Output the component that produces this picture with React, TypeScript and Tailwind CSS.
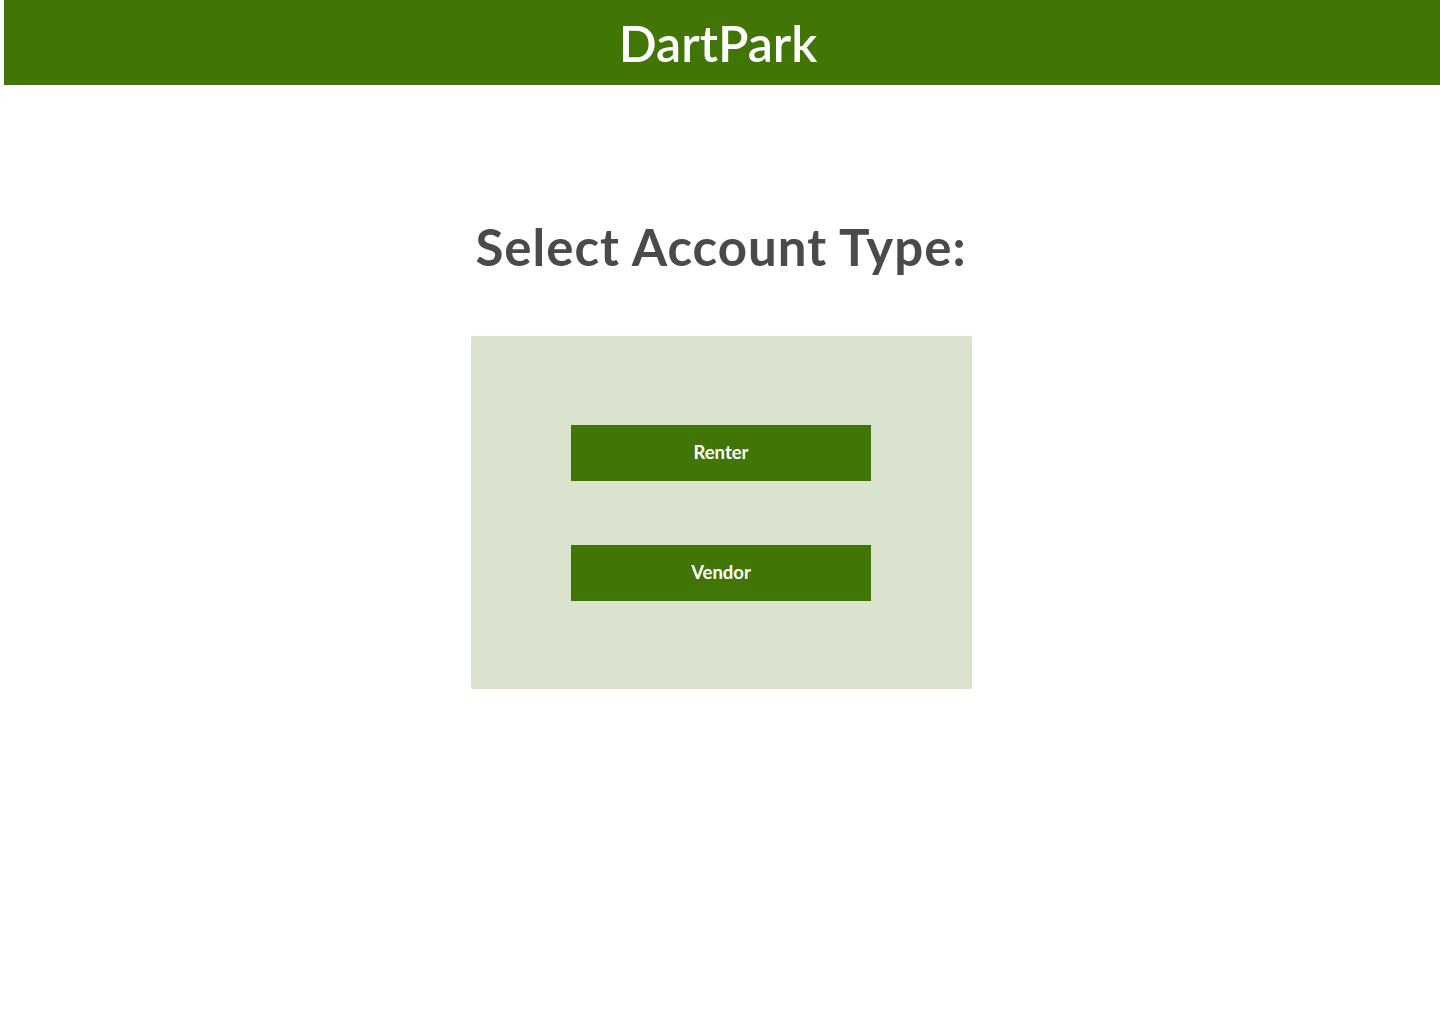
export default function App() {
  return (
    <div className="min-h-screen w-full bg-white" style={{ fontFamily: 'Lato, "Noto Sans", sans-serif' }}>
      <header className="ml-[4px] flex h-[85px] items-center justify-center bg-[#417505] pr-[8px]">
        <h1 className="text-[50px] font-semibold leading-none text-white">DartPark</h1>
      </header>
      <main className="flex flex-col items-center pl-[2px]">
        <h2 className="mt-[134px] text-[51px] font-bold leading-[56px] tracking-[1px] text-[#4a4a4a]">Select Account Type:</h2>
        <div className="mt-[61px] flex h-[353px] w-[501px] flex-col items-center justify-center gap-[64px] rounded-[2px] bg-[#d9e3cd]">
          <button className="flex h-[56px] w-[300px] items-center justify-center bg-[#417505] text-[18.5px] font-bold text-white">
            Renter
          </button>
          <button className="flex h-[56px] w-[300px] items-center justify-center bg-[#417505] text-[18.5px] font-bold text-white">
            Vendor
          </button>
        </div>
      </main>
    </div>
  );
}
